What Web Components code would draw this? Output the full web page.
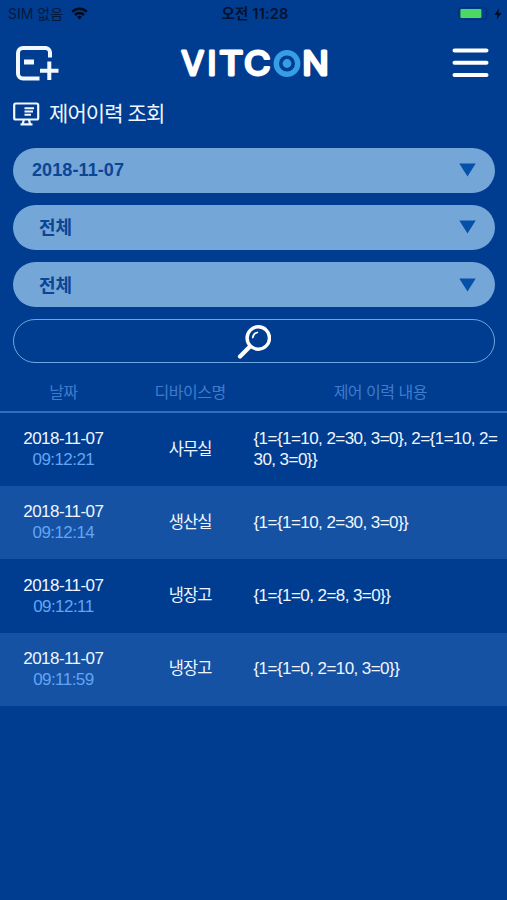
<!DOCTYPE html>
<html lang="ko">
<head>
<meta charset="utf-8">
<meta name="viewport" content="width=device-width, initial-scale=1">
<title>제어이력 조회</title>
<style>
  html, body {
    margin: 0;
    height: 100%;
    background: #003d91;
  }

  body {
    font-family: "Liberation Sans", "Noto Sans CJK KR", sans-serif;
    color: #f0f6ff;
  }
</style>
</head>
<body>
<vit-app>
  <vit-status-bar slot="status" carrier="SIM 없음" time="오전 11:28"></vit-status-bar>
  <vit-header slot="header"></vit-header>
  <vit-title slot="title">제어이력 조회</vit-title>

  <vit-select class="date">2018-11-07</vit-select>
  <vit-select>전체</vit-select>
  <vit-select>전체</vit-select>
  <vit-search-button></vit-search-button>

  <vit-history slot="history">
    <span slot="date">날짜</span>
    <span slot="device">디바이스명</span>
    <span slot="content">제어 이력 내용</span>
    <vit-row date="2018-11-07" time="09:12:21" device="사무실">{1={1=10, 2=30, 3=0}, 2={1=10, 2=30, 3=0}}</vit-row>
    <vit-row date="2018-11-07" time="09:12:14" device="생산실">{1={1=10, 2=30, 3=0}}</vit-row>
    <vit-row date="2018-11-07" time="09:12:11" device="냉장고">{1={1=0, 2=8, 3=0}}</vit-row>
    <vit-row date="2018-11-07" time="09:11:59" device="냉장고">{1={1=0, 2=10, 3=0}}</vit-row>
  </vit-history>
</vit-app>

<script>
class VitApp extends HTMLElement {
  constructor() {
    super();
    this.attachShadow({ mode: "open" });
    this.shadowRoot.innerHTML = `
      <style>
        :host {
          display: flex;
          flex-direction: column;
          min-height: 100vh;
          background: #003d91;
        }

        #filters {
          display: flex;
          flex-direction: column;
          gap: 12px;
          padding: 19.5px 12.5px 0 13px;
        }
      </style>
      <slot name="status"></slot>
      <slot name="header"></slot>
      <slot name="title"></slot>
      <div id="filters"><slot></slot></div>
      <slot name="history"></slot>
    `;
  }
}

class StatusBar extends HTMLElement {
  constructor() {
    super();
    this.attachShadow({ mode: "open" });
    this.shadowRoot.innerHTML = `
      <style>
        :host {
          display: grid;
          grid-template-columns: 1fr auto 1fr;
          align-items: center;
          height: 27px;
          padding: 0 5px 0 8px;
          box-sizing: border-box;
          font: 14px/27px Inter, "Noto Sans CJK KR", sans-serif;
          color: #06193c;
        }

        div {
          display: flex;
          align-items: center;
        }

        #time {
          font-size: 14.5px;
          font-weight: 600;
          letter-spacing: 0.2px;
          color: #03122e;
        }

        #left {
          gap: 8px;
        }

        #right {
          justify-content: flex-end;
          gap: 4px;
        }
      </style>
      <div id="left">
        <span id="carrier"></span>
        <svg width="17" height="13" viewBox="0 0 17 13" fill="none" stroke="#020b1e" stroke-width="2.6">
          <path d="M1.2 4.7a10.4 10.4 0 0 1 14.6 0"/>
          <path d="M4 8a6.4 6.4 0 0 1 9 0"/>
          <path d="M8.5 12.5l-2.5-2.6a3.6 3.6 0 0 1 5 0z" fill="#020b1e" stroke="none"/>
        </svg>
      </div>
      <span id="time"></span>
      <div id="right">
        <svg width="32" height="13" viewBox="0 0 32 13">
          <rect x="0.7" y="0.7" width="28" height="11.6" rx="3" fill="none" stroke="#043174" stroke-width="1.2"/>
          <rect x="2.4" y="2" width="21" height="9" rx="1" fill="#4bd964"/>
          <path d="M30 4.3q1.6 2.2 0 4.4z" fill="#043174"/>
        </svg>
        <svg width="8" height="12" viewBox="0 0 8 12">
          <path d="M5 0.5L0.5 6.8h3L2.7 11.5L7.5 5.1H4.4z" fill="#020b1e"/>
        </svg>
      </div>
    `;
  }

  connectedCallback() {
    this.shadowRoot.querySelector("#carrier").textContent = this.getAttribute("carrier");
    this.shadowRoot.querySelector("#time").textContent = this.getAttribute("time");
  }
}

class Header extends HTMLElement {
  constructor() {
    super();
    this.attachShadow({ mode: "open" });
    this.shadowRoot.innerHTML = `
      <style>
        :host {
          display: flex;
          justify-content: space-between;
          align-items: center;
          height: 72px;
          padding: 0 18px 0 16px;
        }

        svg {
          display: block;
        }

        #logo {
          margin-right: 2px;
        }

        /* thin letters with a round outline give the logo its soft corners */
        text {
          font-family: Inter, sans-serif;
          font-size: 32.5px;
          font-weight: 400;
          fill: #fff;
          stroke: #fff;
          stroke-width: 2.8;
          stroke-linejoin: round;
        }
      </style>
      <svg width="43" height="35" viewBox="0 0 43 35" fill="none" stroke="#f2f8ff" stroke-width="4">
        <path d="M34 11.5V6.5a4.5 4.5 0 0 0-4.5-4.500H7a5 5 0 0 0-5 5v20.5a5 5 0 0 0 5 5h16.5"/>
        <path d="M8 16h10" stroke-width="5"/>
        <path d="M33.3 15.500v18.500M24 24.800h18.500"/>
      </svg>
      <svg id="logo" width="150" height="60" viewBox="0 -12 150 60">
        <text x="1.5" y="30.2">V</text>
        <text x="27.5" y="30.2">I</text>
        <text x="39.2" y="30.2" textLength="24" lengthAdjust="spacingAndGlyphs">T</text>
        <text x="64" y="30.2" textLength="26.5" lengthAdjust="spacingAndGlyphs">C</text>
        <circle cx="107" cy="18.5" r="10.7" fill="none" stroke="#369ee6" stroke-width="5.4"/>
        <circle cx="107" cy="18.5" r="4.4" fill="#369ee6"/>
        <text x="122.3" y="30.2" textLength="26.5" lengthAdjust="spacingAndGlyphs">N</text>
      </svg>
      <svg width="37" height="30" viewBox="0 0 37 30" stroke="#fff" stroke-width="4" stroke-linecap="round">
        <path d="M2.5 2.5h32M2.5 14.7h32M2.5 27h32"/>
      </svg>
    `;
  }
}

class Title extends HTMLElement {
  constructor() {
    super();
    this.attachShadow({ mode: "open" });
    this.shadowRoot.innerHTML = `
      <style>
        :host {
          display: flex;
          align-items: center;
          gap: 9px;
          height: 29px;
          padding-left: 13px;
          font-size: 21px;
          line-height: 29px;
          letter-spacing: -0.9px;
        }
      </style>
      <svg width="27" height="24" viewBox="0 0 27 24" fill="none" stroke="#f2f8ff" stroke-width="2.2">
        <rect x="1.2" y="1.5" width="24" height="16" rx="1.5"/>
        <path d="M11.5 6.2h9.500M11.500 9.500h8.500M11.500 12.800h6.500" stroke-width="2"/>
        <path d="M10.8 17.500l-1 4.500M16 17.500l1 4.500M7.500 22.300h12"/>
      </svg>
      <span><slot></slot></span>
    `;
  }
}

class Select extends HTMLElement {
  constructor() {
    super();
    this.attachShadow({ mode: "open" });
    this.shadowRoot.innerHTML = `
      <style>
        :host {
          display: flex;
          justify-content: space-between;
          align-items: center;
          height: 45.3px;
          box-sizing: border-box;
          padding: 0 19px 0 26px;
          border-radius: 23px;
          background: #75a6d8;
          color: #0b4594;
          font-size: 18px;
          font-weight: bold;
        }

        span {
          padding-bottom: 2px;
        }

        :host(.date) {
          padding-left: 19px;
          letter-spacing: 0.1px;
        }

        :host(.date) span {
          padding-bottom: 0;
        }
      </style>
      <span><slot></slot></span>
      <svg width="17" height="14" viewBox="0 0 17 14">
        <path d="M0.3 0.5h16.4L8.5 13.5z" fill="#0550a8"/>
      </svg>
    `;
  }
}

class SearchButton extends HTMLElement {
  constructor() {
    super();
    this.attachShadow({ mode: "open" });
    this.shadowRoot.innerHTML = `
      <style>
        :host {
          display: flex;
          justify-content: center;
          align-items: center;
          height: 43.5px;
          box-sizing: border-box;
          border: 1.5px solid #6fa5e0;
          border-radius: 22px;
        }
      </style>
      <svg width="34" height="36" viewBox="0 0 34 36" fill="none" stroke="#fff" stroke-linecap="round">
        <circle cx="21.3" cy="15" r="11.2" stroke-width="3.4"/>
        <path d="M13 23.5L3 33.5" stroke-width="4.2"/>
        <path d="M15.8 14.500a6 6 0 0 1 4.500-5" stroke-width="1.8"/>
      </svg>
    `;
  }
}

class History extends HTMLElement {
  constructor() {
    super();
    this.attachShadow({ mode: "open" });
    this.shadowRoot.innerHTML = `
      <style>
        :host {
          display: block;
        }

        header {
          display: grid;
          grid-template-columns: 1fr 1fr 2fr;
          align-items: center;
          height: 50px;
          box-sizing: border-box;
          padding-top: 8px;
          border-bottom: 2px solid #2f6dbd;
          text-align: center;
          color: #3f7ccb;
          font-size: 16px;
          letter-spacing: -0.5px;
        }

        ::slotted(vit-row:nth-of-type(even)) {
          background: #1552a4;
        }
      </style>
      <header>
        <slot name="date"></slot>
        <slot name="device"></slot>
        <slot name="content"></slot>
      </header>
      <slot></slot>
    `;
  }
}

class Row extends HTMLElement {
  constructor() {
    super();
    this.attachShadow({ mode: "open" });
    this.shadowRoot.innerHTML = `
      <style>
        :host {
          display: grid;
          grid-template-columns: 1fr 1fr 2fr;
          align-items: center;
          height: 73.3px;
          box-sizing: border-box;
          padding-bottom: 1px;
          font-size: 17px;
          line-height: 21px;
          letter-spacing: -0.56px;
        }

        #when, #device {
          text-align: center;
        }

        #time {
          color: #62a4f5;
        }

        #device {
          font-size: 16.5px;
          letter-spacing: -0.9px;
        }

        #content {
          padding-right: 5px;
          word-break: break-all;
        }
      </style>
      <div id="when">
        <div id="date"></div>
        <div id="time"></div>
      </div>
      <div id="device"></div>
      <div id="content"><slot></slot></div>
    `;
  }

  connectedCallback() {
    for (const name of ["date", "time", "device"]) {
      this.shadowRoot.querySelector("#" + name).textContent = this.getAttribute(name);
    }
  }
}

customElements.define("vit-app", VitApp);
customElements.define("vit-status-bar", StatusBar);
customElements.define("vit-header", Header);
customElements.define("vit-title", Title);
customElements.define("vit-select", Select);
customElements.define("vit-search-button", SearchButton);
customElements.define("vit-history", History);
customElements.define("vit-row", Row);
</script>
</body>
</html>
